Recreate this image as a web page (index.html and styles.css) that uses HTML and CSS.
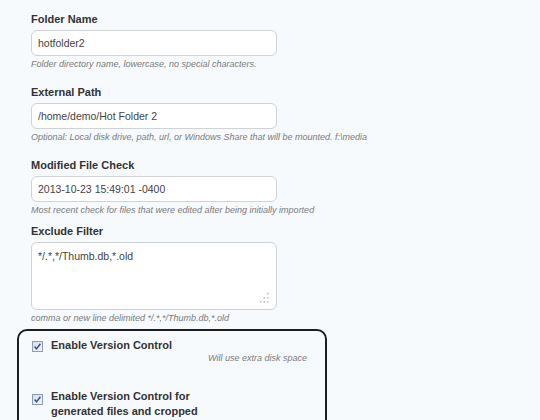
FILE: index.html
```html
<!DOCTYPE html>
<html>
<head>
<meta charset="utf-8">
<link rel="stylesheet" href="styles.css">
</head>
<body>
<div class="form">
  <div class="field f-gap">
    <label class="lbl">Folder Name</label>
    <input class="txt" type="text" value="hotfolder2" readonly>
    <div class="help">Folder directory name, lowercase, no special characters.</div>
  </div>
  <div class="field f-gap">
    <label class="lbl">External Path</label>
    <input class="txt" type="text" value="/home/demo/Hot Folder 2" readonly>
    <div class="help">Optional: Local disk drive, path, url, or Windows Share that will be mounted. f:\media</div>
  </div>
  <div class="field f-gap-small">
    <label class="lbl">Modified File Check</label>
    <input class="txt" type="text" value="2013-10-23 15:49:01 -0400" readonly>
    <div class="help">Most recent check for files that were edited after being initially imported</div>
  </div>
  <div class="field f-gap-box">
    <label class="lbl">Exclude Filter</label>
    <div class="ta-wrap">
      <textarea class="ta" readonly>*/.*,*/Thumb.db,*.old</textarea>
      <svg class="grip" width="12" height="12" viewBox="0 0 12 12">
        <g fill="#b8bcc0">
          <rect x="9" y="1" width="1.5" height="1.5"/>
          <rect x="5.5" y="5" width="1.5" height="1.5"/>
          <rect x="9" y="5" width="1.5" height="1.5"/>
          <rect x="2" y="9" width="1.5" height="1.5"/>
          <rect x="5.5" y="9" width="1.5" height="1.5"/>
          <rect x="9" y="9" width="1.5" height="1.5"/>
        </g>
      </svg>
    </div>
    <div class="help">comma or new line delimited */.*,*/Thumb.db,*.old</div>
  </div>

  <div class="box">
    <div class="check-row">
      <svg class="cb" width="11" height="11" viewBox="0 0 11 11">
        <defs>
          <linearGradient id="g1" x1="0" y1="0" x2="1" y2="1">
            <stop offset="0" stop-color="#d6dcea"/>
            <stop offset="1" stop-color="#f4f6fb"/>
          </linearGradient>
        </defs>
        <rect x="0.5" y="0.5" width="10" height="10" fill="url(#g1)" stroke="#8f9cb8"/>
        <path d="M2.6 5.6 L4.5 7.9 L8.4 2.8" fill="none" stroke="#2d4d9a" stroke-width="1.5"/>
      </svg>
      <div class="check-text">
        <div class="check-label">Enable Version Control</div>
        <div class="check-help">Will use extra disk space</div>
      </div>
    </div>
    <div class="check-row second">
      <svg class="cb" width="11" height="11" viewBox="0 0 11 11">
        <rect x="0.5" y="0.5" width="10" height="10" fill="url(#g1)" stroke="#8f9cb8"/>
        <path d="M2.6 5.6 L4.5 7.9 L8.4 2.8" fill="none" stroke="#2d4d9a" stroke-width="1.5"/>
      </svg>
      <div class="check-text">
        <div class="check-label narrow">Enable Version Control for generated files and cropped</div>
      </div>
    </div>
  </div>
</div>
</body>
</html>
```
FILE: styles.css
```css
html, body {
  margin: 0;
  padding: 0;
  background: #f6fafd;
  font-family: "Liberation Sans", Arial, sans-serif;
  color: #333;
  overflow: hidden;
}

.form {
  padding: 12px 0 0 17px;
}

.field {
  margin-left: 14px;
}

.f-gap { margin-bottom: 15px; }
.f-gap-small { margin-bottom: 8px; }
.f-gap-box { margin-bottom: 5px; }

.lbl {
  display: block;
  font-size: 11px;
  line-height: 14px;
  font-weight: bold;
  color: #333;
  margin-bottom: 4px;
}

.txt {
  display: block;
  box-sizing: border-box;
  width: 246px;
  height: 26px;
  margin: 0;
  padding: 0 6px;
  border: 1px solid #cfd3d6;
  border-radius: 6px;
  background: #fff;
  font-family: "Liberation Sans", Arial, sans-serif;
  font-size: 10.5px;
  color: #444;
  outline: none;
}

.help {
  margin-top: 2px;
  font-size: 9px;
  line-height: 12px;
  font-style: italic;
  color: #7a7a7a;
  white-space: nowrap;
}

.ta-wrap {
  position: relative;
  width: 246px;
  height: 68px;
}

.ta {
  display: block;
  box-sizing: border-box;
  width: 246px;
  height: 68px;
  margin: 0;
  padding: 7px 6px;
  border: 1px solid #cfd3d6;
  border-radius: 6px;
  background: #fff;
  font-family: "Liberation Sans", Arial, sans-serif;
  font-size: 10.5px;
  line-height: 13px;
  color: #444;
  resize: none;
  outline: none;
  overflow: hidden;
}

.grip {
  position: absolute;
  right: 7px;
  bottom: 6px;
}

.box {
  box-sizing: border-box;
  width: 310px;
  height: 110px;
  border: 2px solid #1e1e1e;
  border-radius: 10px;
  padding: 7px 18px 0 13px;
}

.check-row {
  display: flex;
  align-items: flex-start;
}

.check-row.second {
  margin-top: 25px;
}

.cb {
  flex: none;
  margin-top: 3px;
  margin-right: 8px;
}

.second .cb {
  margin-top: 5px;
}

.check-text {
  flex: 1;
}

.check-label {
  font-size: 11px;
  line-height: 14px;
  font-weight: bold;
  color: #333;
}

.check-label.narrow {
  width: 165px;
  line-height: 15px;
}

.check-help {
  text-align: right;
  font-size: 9px;
  line-height: 12px;
  font-style: italic;
  color: #7a7a7a;
}
```
